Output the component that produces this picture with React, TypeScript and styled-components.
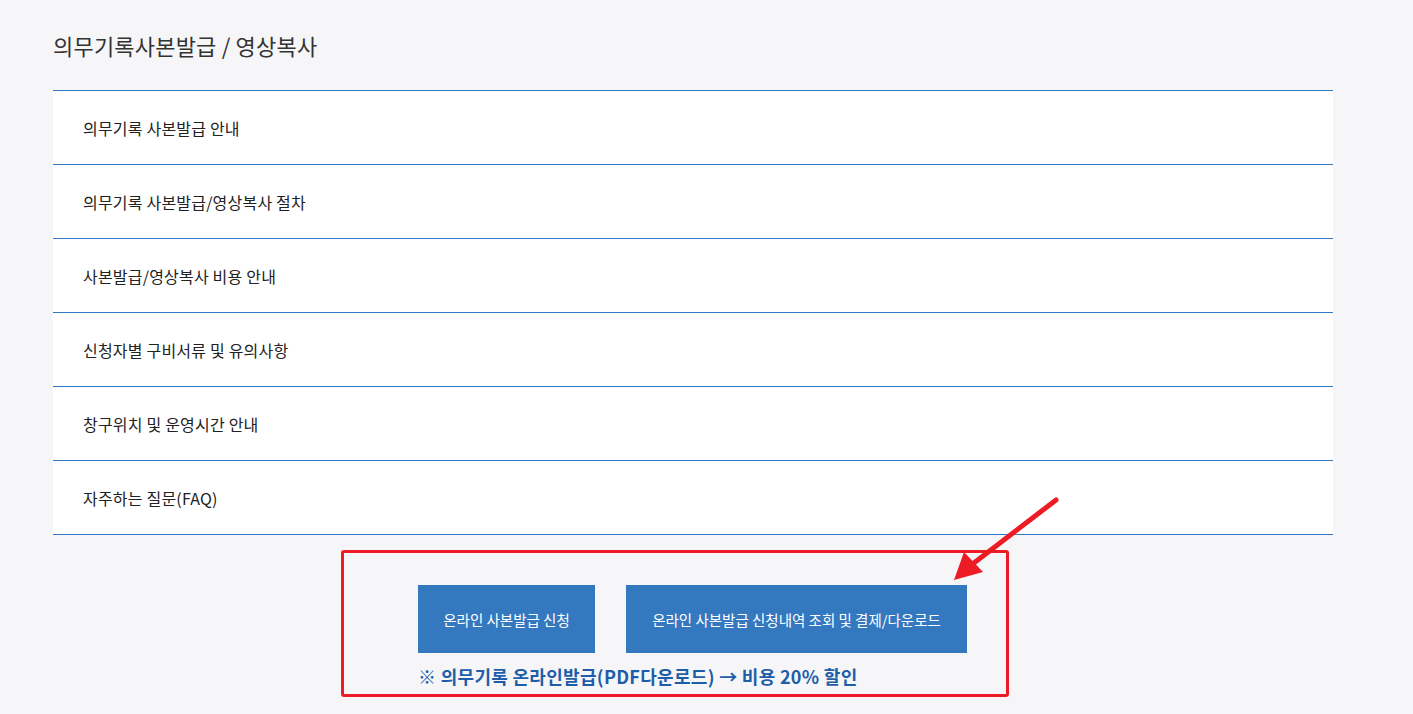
import React from "react";
import styled, { createGlobalStyle } from "styled-components";

const GlobalStyle = createGlobalStyle`
  html, body {
    margin: 0;
    padding: 0;
    background: #f6f6f8;
    font-family: "Noto Sans CJK KR", "Noto Sans", sans-serif;
  }
`;

const Page = styled.div`
  position: relative;
  width: 1333px;
  padding: 26px 0 0 53px;
  min-height: 714px;
  box-sizing: border-box;
`;

const Title = styled.h2`
  margin: 0;
  font-size: 22px;
  font-weight: 400;
  color: #333;
  letter-spacing: 0.2px;
  line-height: 38px;
`;

const List = styled.ul`
  list-style: none;
  margin: 26px 0 0;
  padding: 0;
  background: #fff;
  border-bottom: 1px solid #2f78c5;
`;

const ListItem = styled.li`
  border-top: 1px solid #2f78c5;
  height: 73px;
  display: flex;
  align-items: center;
  padding-left: 30px;
  font-size: 16px;
  color: #222;
  letter-spacing: 0.2px;
`;

const Actions = styled.div`
  display: flex;
  justify-content: center;
  margin-top: 50px;
`;

const ActionsInner = styled.div`
  display: flex;
  flex-direction: column;
  margin-left: -1px;
`;

const ButtonRow = styled.div`
  display: flex;
  gap: 31px;
`;

const Button = styled.a<{ $width: number }>`
  width: ${({ $width }) => $width}px;
  height: 68px;
  display: flex;
  align-items: center;
  justify-content: center;
  background: #3478c0;
  color: #fff;
  font-size: 14.5px;
  letter-spacing: 0;
  text-decoration: none;
  cursor: pointer;
`;

const Note = styled.p`
  margin: 8px 0 0;
  font-size: 18px;
  font-weight: 700;
  color: #1e5ea9;
  letter-spacing: 0.3px;
  line-height: 30px;
`;

const Highlight = styled.div`
  position: absolute;
  left: 341px;
  top: 550px;
  width: 668px;
  height: 147px;
  border: 3px solid #ed1c24;
  border-radius: 3px;
  box-sizing: border-box;
  pointer-events: none;
`;

const Arrow = styled.svg`
  position: absolute;
  left: 940px;
  top: 490px;
  pointer-events: none;
`;

const items = [
  "의무기록 사본발급 안내",
  "의무기록 사본발급/영상복사 절차",
  "사본발급/영상복사 비용 안내",
  "신청자별 구비서류 및 유의사항",
  "창구위치 및 운영시간 안내",
  "자주하는 질문(FAQ)"
];

const App: React.FunctionComponent<{}> = () => {
  return (
    <>
      <GlobalStyle />
      <Page>
        <Title>의무기록사본발급 / 영상복사</Title>
        <List>
          {items.map(item => (
            <ListItem key={item}>{item}</ListItem>
          ))}
        </List>
        <Actions>
          <ActionsInner>
            <ButtonRow>
              <Button $width={177}>온라인 사본발급 신청</Button>
              <Button $width={341}>
                온라인 사본발급 신청내역 조회 및 결제/다운로드
              </Button>
            </ButtonRow>
            <Note>※ 의무기록 온라인발급(PDF다운로드) → 비용 20% 할인</Note>
          </ActionsInner>
        </Actions>
      </Page>
      <Highlight />
      <Arrow width="130" height="100" viewBox="0 0 130 100">
        <line
          x1="116"
          y1="10"
          x2="30"
          y2="76"
          stroke="#ed1c24"
          strokeWidth="5"
          strokeLinecap="round"
        />
        <polygon points="14,90 24,62 43,82" fill="#ed1c24" />
      </Arrow>
    </>
  );
};

export default App;
